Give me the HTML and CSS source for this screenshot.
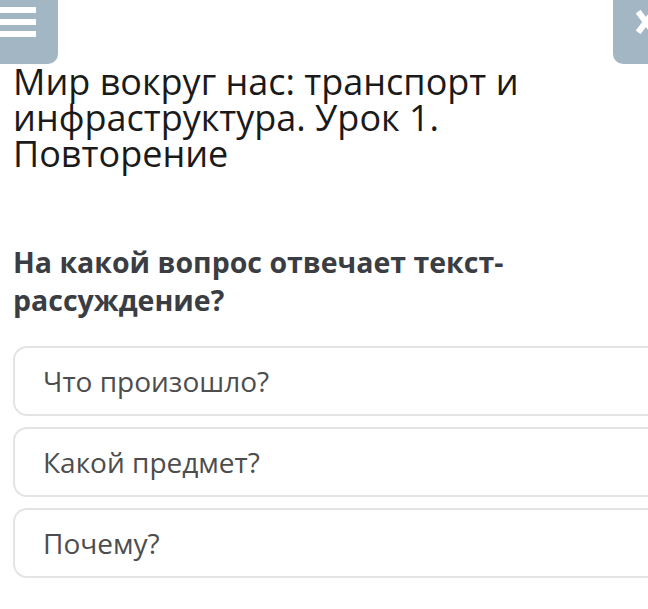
FILE: index.html
```html
<!DOCTYPE html>
<html lang="ru">
<head>
    <meta charset="UTF-8">
    <meta name="viewport" content="width=device-width, initial-scale=1.0">
    <title>Мир вокруг нас</title>
    <link rel="stylesheet" href="styles.css">
</head>
<body>
    <div class="topbar">
        <button class="menu-btn" aria-label="Меню">
            <span class="bar"></span>
            <span class="bar"></span>
            <span class="bar"></span>
        </button>
        <button class="close-btn" aria-label="Закрыть">
            <svg width="20" height="24" viewBox="0 0 20 24">
                <path d="M4 4 L16 20 M16 4 L4 20" stroke="#fff" stroke-width="6" stroke-linecap="square"/>
            </svg>
        </button>
    </div>

    <div class="container">
        <h1 class="title">Мир вокруг нас: транспорт и инфраструктура. Урок 1. Повторение</h1>

        <h2 class="question">На какой вопрос отвечает текст-рассуждение?</h2>

        <div class="answers">
            <div class="answer">Что произошло?</div>
            <div class="answer">Какой предмет?</div>
            <div class="answer">Почему?</div>
        </div>
    </div>
</body>
</html>
```

FILE: styles.css
```css
html, body {
    margin: 0;
    padding: 0;
    background: #fff;
    overflow: hidden;
}
body {
    font-family: "Open Sans", "Noto Sans", sans-serif;
    color: #333;
}
.topbar {
    display: flex;
    justify-content: space-between;
    height: 64px;
}
.menu-btn, .close-btn {
    border: none;
    padding: 0;
    background: #a3b6c4;
    height: 64px;
    cursor: pointer;
}
.menu-btn {
    width: 58px;
    border-bottom-right-radius: 10px;
    display: flex;
    flex-direction: column;
    align-items: flex-start;
    gap: 6px;
    padding-top: 7px;
    justify-content: flex-start;
}
.bar {
    display: block;
    width: 36px;
    height: 6px;
    background: #fff;
}
.close-btn {
    width: 35px;
    border-bottom-left-radius: 10px;
    display: flex;
    justify-content: flex-end;
    align-items: flex-start;
    padding-top: 10px;
    overflow: hidden;
}
.close-btn svg {
    margin-right: -8px;
}
.container {
    padding: 0 0 0 13px;
}
.title {
    margin: 0;
    font-weight: 400;
    font-size: 36px;
    line-height: 36px;
    color: #1a1a1a;
    padding-right: 100px;
}
.question {
    margin: 71px 0 0;
    font-weight: 700;
    font-size: 28.5px;
    line-height: 38px;
    color: #3a3d42;
    padding-right: 120px;
}
.answers {
    margin-top: 27px;
    display: flex;
    flex-direction: column;
    gap: 11px;
}
.answer {
    height: 66px;
    border: 2px solid #e2e4e6;
    border-right: none;
    border-radius: 14px 0 0 14px;
    display: flex;
    align-items: center;
    padding-left: 28px;
    font-size: 28px;
    color: #4d4d4d;
}
```
